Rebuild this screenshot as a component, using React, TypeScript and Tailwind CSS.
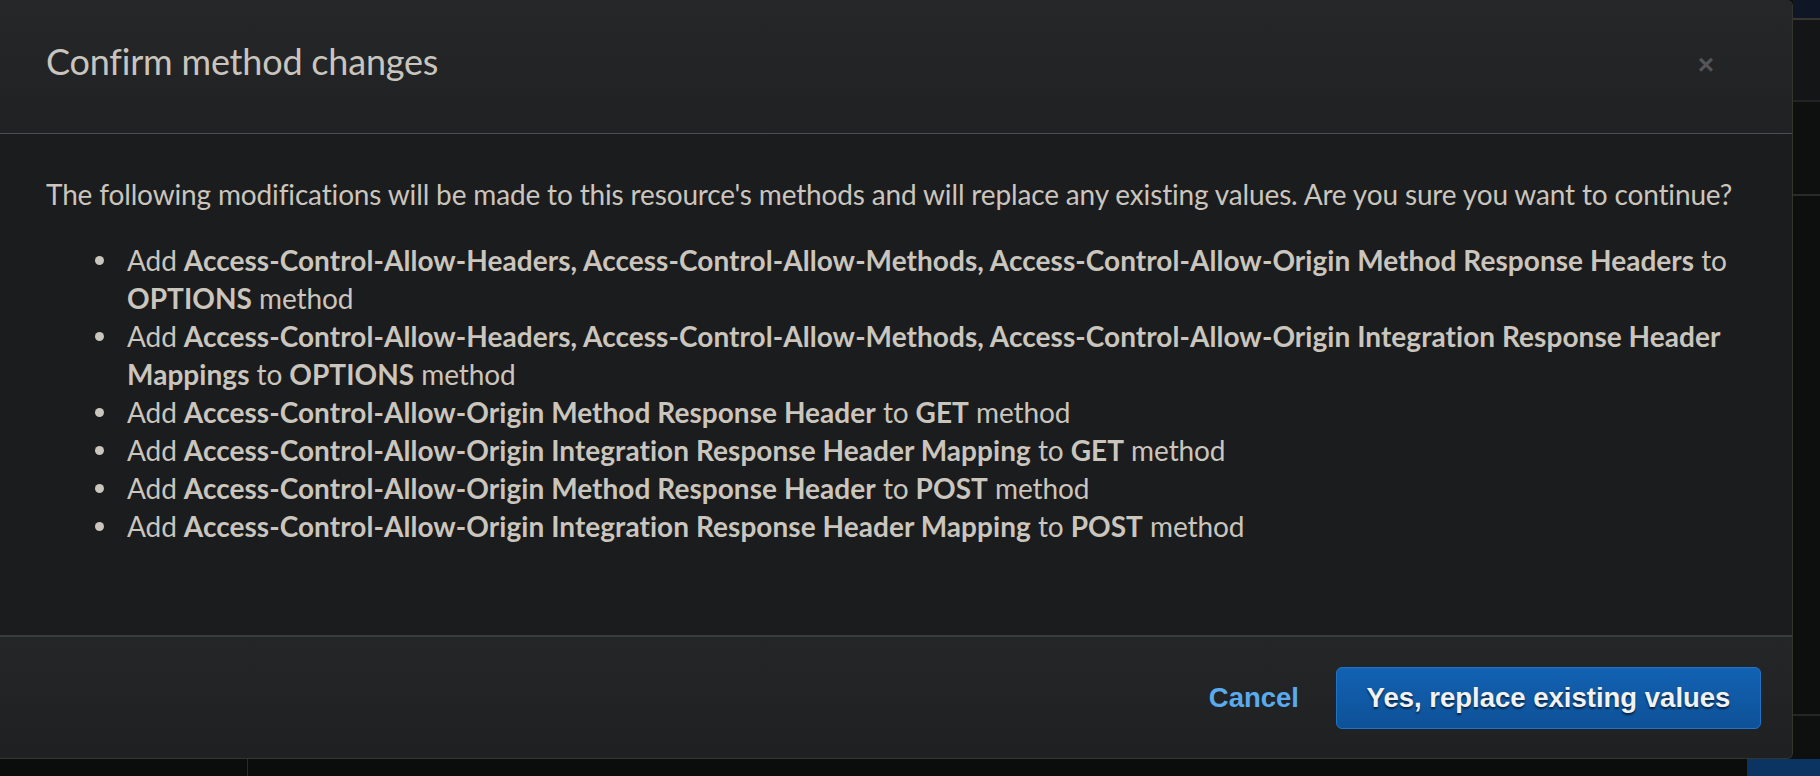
import React from "react";

const FONT = { fontFamily: "Lato, 'Noto Sans', sans-serif" };
const BTN_FONT = { fontFamily: "'Liberation Sans', Arial, sans-serif" };

const changes: React.ReactNode[] = [
  <>
    Add <b>Access-Control-Allow-Headers, Access-Control-Allow-Methods, Access-Control-Allow-Origin Method Response Headers</b> to
    <br />
    <b>OPTIONS</b> method
  </>,
  <>
    Add <b>Access-Control-Allow-Headers, Access-Control-Allow-Methods, Access-Control-Allow-Origin Integration Response Header</b>
    <br />
    <b>Mappings</b> to <b>OPTIONS</b> method
  </>,
  <>
    Add <b>Access-Control-Allow-Origin Method Response Header</b> to <b>GET</b> method
  </>,
  <>
    Add <b>Access-Control-Allow-Origin Integration Response Header Mapping</b> to <b>GET</b> method
  </>,
  <>
    Add <b>Access-Control-Allow-Origin Method Response Header</b> to <b>POST</b> method
  </>,
  <>
    Add <b>Access-Control-Allow-Origin Integration Response Header Mapping</b> to <b>POST</b> method
  </>,
];

const ConfirmModal = () => (
  <div className="w-[1793px] h-full flex flex-col bg-[#1b1c1e] border-r border-b border-[#36342f] rounded-tr-[6px] rounded-br-[6px] overflow-hidden">
    {/* Header */}
    <div className="h-[134px] shrink-0 flex items-center justify-between pl-[46px] pr-[78px] pb-[12px] bg-gradient-to-b from-[#252729] to-[#1f2123] border-b border-[#4a4d4f]">
      <h2 className="text-[36px] text-[#c9c5be] tracking-[-0.2px]" style={FONT}>
        Confirm method changes
      </h2>
      <span className="text-[28px] font-bold text-[#545556] leading-none mt-[8px]" style={BTN_FONT}>
        ×
      </span>
    </div>

    {/* Body */}
    <div className="flex-1 pl-[46px] pt-[41px] text-[#cac5bd] text-[28px] leading-[38px]" style={FONT}>
      <p className="whitespace-nowrap tracking-[-0.15px]">
        The following modifications will be made to this resource's methods and will replace any existing values. Are you sure you want to continue?
      </p>
      <ul className="mt-[28px] pl-[49px] whitespace-nowrap">
        {changes.map((c, i) => (
          <li key={i} className="flex [&_b]:font-bold [&_b]:tracking-[0.05px]">
            <span className="w-[32px] shrink-0 h-[38px] flex items-center">
              <span className="w-[9px] h-[9px] rounded-full bg-[#cac5bd]" />
            </span>
            <span className="tracking-[-0.1px]">{c}</span>
          </li>
        ))}
      </ul>
    </div>

    {/* Footer */}
    <div className="h-[123px] shrink-0 flex items-center justify-end gap-[37px] pr-[31px] border-t-2 border-[#363d3d] bg-gradient-to-b from-[#242628] to-[#1e2022]">
      <button className="text-[27.5px] font-bold text-[#5aabee]" style={BTN_FONT}>
        Cancel
      </button>
      <button
        className="h-[62px] w-[425px] rounded-[6px] border border-[#2173c8] bg-gradient-to-b from-[#1262b3] to-[#0e5198] text-[27.5px] font-bold text-[#f2f2f2] [text-shadow:0_2px_2px_rgba(0,0,0,0.6)]"
        style={BTN_FONT}
      >
        Yes, replace existing values
      </button>
    </div>
  </div>
);

export default function App() {
  return (
    <div className="w-[1820px] h-[776px] overflow-hidden bg-[#0e0f0f] flex flex-col">
      <div className="h-[759px] flex">
        <ConfirmModal />
        {/* page behind the overlay */}
        <div className="flex-1 flex flex-col">
          <div className="h-[18px] bg-[#0f1726]" />
          <div className="h-[82px] bg-[#141516] border-t-2 border-[#38362f]" />
          <div className="h-[94px] border-t-2 border-[#232323] bg-[#0e0f0f]" />
          <div className="h-[520px] border-t-2 border-[#2a2a2a] bg-[#0d0f0e]" />
          <div className="flex-1 border-t-2 border-[#262626] bg-[#0e0f0f]" />
        </div>
      </div>
      <div className="flex-1 flex bg-[#0b0c0c]">
        <div className="w-[247px]" />
        <div className="w-px bg-[#2a2a2a]" />
        <div className="flex-1" />
        <div className="w-[73px] bg-[#0b3463]" />
      </div>
    </div>
  );
}
